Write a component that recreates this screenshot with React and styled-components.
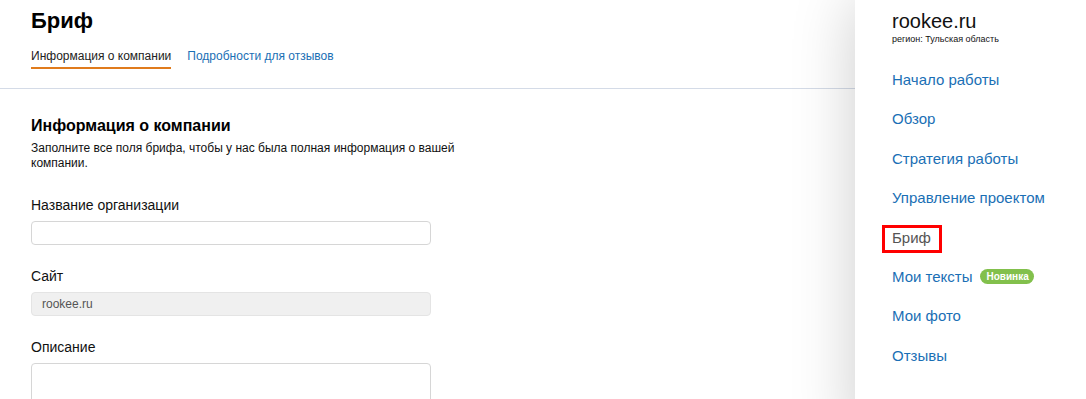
import React from 'react'
import styled, { createGlobalStyle } from 'styled-components'

const GlobalStyle = createGlobalStyle`
  html, body {
    margin: 0;
    padding: 0;
    background: #fff;
    overflow: hidden;
  }
  body {
    font-family: 'Liberation Sans', Arial, sans-serif;
    color: #000;
  }
`

const Page = styled.div`
  display: grid;
  grid-template-columns: 1fr 231px;
  height: 399px;
`

const Main = styled.main`
  min-width: 0;
`

const Header = styled.header`
  padding: 8px 32px 19px 31px;
  border-bottom: 1px solid #d4dbe7;
`

const Title = styled.h1`
  margin: 0;
  font-size: 22px;
  font-weight: bold;
  color: #000;
`

const Tabs = styled.nav`
  display: flex;
  gap: 16px;
  margin-top: 15px;
`

const Tab = styled.a`
  font-size: 12px;
  line-height: 14px;
  padding-bottom: 4px;
  text-decoration: none;
  color: ${p => (p.$active ? '#222' : '#1a6fb5')};
  border-bottom: 2px solid ${p => (p.$active ? '#e07b1c' : 'transparent')};
`

const Section = styled.section`
  padding: 27px 31px 0;
`

const SectionTitle = styled.h2`
  margin: 0;
  font-size: 16px;
  line-height: 19px;
  font-weight: bold;
`

const Lead = styled.p`
  margin: 6px 0 0;
  max-width: 440px;
  font-size: 12px;
  line-height: 15px;
  color: #111;
`

const Fields = styled.div`
  margin-top: 26px;
  display: flex;
  flex-direction: column;
  gap: 23px;
  width: 400px;
`

const Field = styled.div`
  display: flex;
  flex-direction: column;
  gap: 8px;
`

const Label = styled.label`
  font-size: 14px;
  line-height: 16px;
  color: #111;
`

const Input = styled.div`
  box-sizing: border-box;
  height: ${p => (p.$tall ? '80px' : '24px')};
  border: 1px solid ${p => (p.$disabled ? '#e4e4e4' : '#d6d6d6')};
  border-radius: 4px;
  background: ${p => (p.$disabled ? '#f0f0f0' : '#fff')};
  padding: 0 10px;
  display: flex;
  align-items: center;
  font-size: 12px;
  color: #555;
`

const Sidebar = styled.aside`
  position: relative;
  z-index: 1;
  background: #fff;
  box-shadow: 0 0 60px rgba(0, 0, 0, 0.2);
  padding: 10px 0 0 37px;
`

const SiteName = styled.div`
  font-size: 20px;
  line-height: 23px;
  color: #111;
`

const Region = styled.div`
  margin-top: 1px;
  font-size: 9px;
  line-height: 11px;
  color: #111;
`

const Menu = styled.ul`
  list-style: none;
  margin: 15px 0 0;
  padding: 0;
`

const MenuItem = styled.li`
  padding: 11px 0;
  line-height: 17.4px;
  display: flex;
  align-items: center;
`

const MenuLink = styled.a`
  position: relative;
  font-size: 15px;
  text-decoration: none;
  color: ${p => (p.$current ? '#555' : '#1a6fb5')};

  ${p => p.$current && `
    &::after {
      content: '';
      position: absolute;
      left: -10px;
      right: -11px;
      top: -4px;
      bottom: -7px;
      border: 3px solid #f00;
    }
  `}
`

const Badge = styled.span`
  margin-left: 8px;
  height: 15px;
  padding: 0 5px 0 6px;
  border-radius: 8px;
  background: #82c04c;
  color: #fff;
  font-size: 10px;
  font-weight: bold;
  line-height: 15px;
`

const menu = [
  { label: 'Начало работы' },
  { label: 'Обзор' },
  { label: 'Стратегия работы' },
  { label: 'Управление проектом' },
  { label: 'Бриф', current: true },
  { label: 'Мои тексты', badge: 'Новинка' },
  { label: 'Мои фото' },
  { label: 'Отзывы' },
]

export default function App() {
  return (
    <>
      <GlobalStyle />
      <Page>
        <Main>
          <Header>
            <Title>Бриф</Title>
            <Tabs>
              <Tab $active>Информация о компании</Tab>
              <Tab>Подробности для отзывов</Tab>
            </Tabs>
          </Header>
          <Section>
            <SectionTitle>Информация о компании</SectionTitle>
            <Lead>
              Заполните все поля брифа, чтобы у нас была полная информация о вашей компании.
            </Lead>
            <Fields>
              <Field>
                <Label>Название организации</Label>
                <Input />
              </Field>
              <Field>
                <Label>Сайт</Label>
                <Input $disabled>rookee.ru</Input>
              </Field>
              <Field>
                <Label>Описание</Label>
                <Input $tall />
              </Field>
            </Fields>
          </Section>
        </Main>
        <Sidebar>
          <SiteName>rookee.ru</SiteName>
          <Region>регион: Тульская область</Region>
          <Menu>
            {menu.map(item => (
              <MenuItem key={item.label}>
                <MenuLink $current={item.current}>{item.label}</MenuLink>
                {item.badge && <Badge>{item.badge}</Badge>}
              </MenuItem>
            ))}
          </Menu>
        </Sidebar>
      </Page>
    </>
  )
}
